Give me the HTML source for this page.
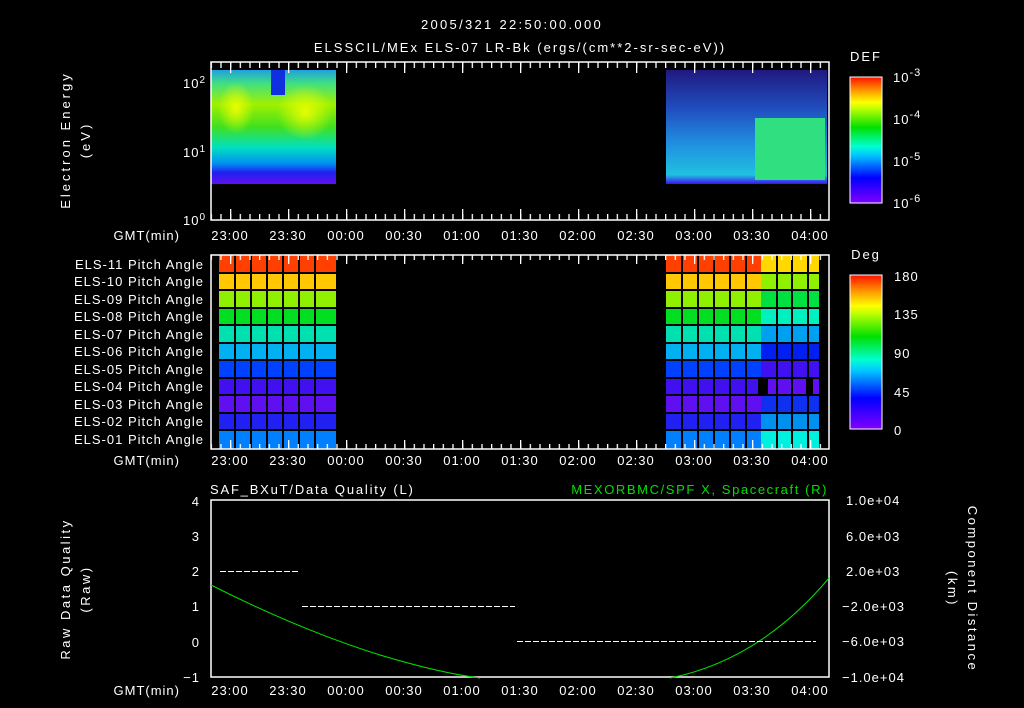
<!DOCTYPE html>
<html><head><meta charset="utf-8"><style>
html,body{margin:0;padding:0;background:#000;}
svg{display:block}
text{font-family:"Liberation Sans",sans-serif;fill:#fff;font-size:13px;letter-spacing:1px}
</style></head><body>
<svg width="1024" height="708" viewBox="0 0 1024 708" xmlns="http://www.w3.org/2000/svg">
<defs>
<linearGradient id="rb" x1="0" y1="1" x2="0" y2="0">
<stop offset="0" stop-color="#8000ff"/><stop offset="0.2" stop-color="#0000ff"/><stop offset="0.38" stop-color="#00c8ff"/><stop offset="0.45" stop-color="#00ffd0"/><stop offset="0.6" stop-color="#00e000"/><stop offset="0.75" stop-color="#c0ff00"/><stop offset="0.8" stop-color="#ffff00"/><stop offset="0.9" stop-color="#ff9000"/><stop offset="1" stop-color="#ff1000"/></linearGradient>
<linearGradient id="spL" x1="0" y1="0" x2="0" y2="1">
<stop offset="0" stop-color="#20a0e0"/><stop offset="0.12" stop-color="#40e080"/><stop offset="0.3" stop-color="#a0f000"/><stop offset="0.5" stop-color="#40e020"/><stop offset="0.68" stop-color="#00e0c0"/><stop offset="0.82" stop-color="#0090f0"/><stop offset="0.9" stop-color="#2020f0"/><stop offset="1" stop-color="#6010f0"/></linearGradient>
<linearGradient id="spR" x1="0" y1="0" x2="0" y2="1">
<stop offset="0" stop-color="#201880"/><stop offset="0.35" stop-color="#2050c0"/><stop offset="0.65" stop-color="#2090e0"/><stop offset="0.92" stop-color="#20c0e0"/><stop offset="1" stop-color="#4010f0"/></linearGradient>
<radialGradient id="yl"><stop offset="0" stop-color="#f0ff00" stop-opacity="0.9"/><stop offset="1" stop-color="#f0ff00" stop-opacity="0"/></radialGradient>
<pattern id="tk" x="230" y="0" width="9.667" height="708" patternUnits="userSpaceOnUse"><rect x="0" y="0" width="1.3" height="708" fill="#fff"/></pattern>
<pattern id="tkM" x="230" y="0" width="58" height="708" patternUnits="userSpaceOnUse"><rect x="0" y="0" width="1.3" height="708" fill="#fff"/></pattern>
</defs>

<text x="512" y="29" text-anchor="middle" font-size="18" style="letter-spacing:2.3px">2005/321 22:50:00.000</text>
<text x="520" y="52" text-anchor="middle" font-size="17" style="letter-spacing:2px">ELSSCIL/MEx ELS-07 LR-Bk  (ergs/(cm**2-sr-sec-eV))</text>

<!-- Panel 1 -->
<rect x="211" y="70" width="125" height="114" fill="url(#spL)"/>
<ellipse cx="236" cy="108" rx="18" ry="26" fill="url(#yl)"/>
<ellipse cx="305" cy="112" rx="28" ry="28" fill="url(#yl)"/>
<rect x="271" y="70" width="14" height="25" fill="#1030e0"/>
<rect x="666" y="70" width="161" height="114" fill="url(#spR)"/>
<rect x="755" y="118" width="70" height="62" fill="#30e080"/>
<rect x="211" y="62" width="618" height="6" fill="url(#tk)"/>
<rect x="211" y="62" width="618" height="11" fill="url(#tkM)"/>
<rect x="211" y="214" width="618" height="6" fill="url(#tk)"/>
<rect x="211" y="209" width="618" height="11" fill="url(#tkM)"/>
<rect x="211" y="62" width="618" height="158" fill="none" stroke="#fff" stroke-width="1.5"/>
<text x="206" y="88" text-anchor="end" font-size="14">10<tspan dy="-5" font-size="10">2</tspan></text>
<text x="206" y="157" text-anchor="end" font-size="14">10<tspan dy="-5" font-size="10">1</tspan></text>
<text x="206" y="225" text-anchor="end" font-size="14">10<tspan dy="-5" font-size="10">0</tspan></text>
<text transform="translate(70,140) rotate(-90)" text-anchor="middle" font-size="15" style="letter-spacing:3px">Electron Energy</text>
<text transform="translate(90,140) rotate(-90)" text-anchor="middle" font-size="15" style="letter-spacing:3px">(eV)</text>
<text x="180" y="240" text-anchor="end">GMT(min)</text>
<g text-anchor="middle" font-size="14">
<text x="230" y="240">23:00</text><text x="288" y="240">23:30</text><text x="346" y="240">00:00</text><text x="404" y="240">00:30</text><text x="462" y="240">01:00</text><text x="520" y="240">01:30</text><text x="578" y="240">02:00</text><text x="636" y="240">02:30</text><text x="694" y="240">03:00</text><text x="752" y="240">03:30</text><text x="810" y="240">04:00</text></g>
<text x="866" y="61" text-anchor="middle" font-size="17" style="letter-spacing:2px">DEF</text>
<rect x="850" y="77" width="32" height="126" fill="url(#rb)" stroke="#fff"/>
<g font-size="16"><text x="893" y="82">10<tspan dy="-6" font-size="11">-3</tspan></text><text x="893" y="124">10<tspan dy="-6" font-size="11">-4</tspan></text><text x="893" y="166">10<tspan dy="-6" font-size="11">-5</tspan></text><text x="893" y="208">10<tspan dy="-6" font-size="11">-6</tspan></text></g>

<!-- Panel 2 -->
<g id="rows">
<rect x="219" y="255" width="117" height="18" fill="#ff4000"/>
<rect x="219" y="273" width="117" height="17" fill="#ffc800"/>
<rect x="219" y="290" width="117" height="18" fill="#90f000"/>
<rect x="219" y="308" width="117" height="17" fill="#00e020"/>
<rect x="219" y="325" width="117" height="18" fill="#00e0b0"/>
<rect x="219" y="343" width="117" height="17" fill="#00b0f0"/>
<rect x="219" y="360" width="117" height="18" fill="#0040ff"/>
<rect x="219" y="378" width="117" height="17" fill="#4010f0"/>
<rect x="219" y="395" width="117" height="18" fill="#6010f0"/>
<rect x="219" y="413" width="117" height="17" fill="#2020f0"/>
<rect x="219" y="430" width="117" height="19" fill="#0080ff"/>
</g>
<use href="#rows" x="447"/>
<g>
<rect x="761" y="255" width="58" height="18" fill="#ffd800"/>
<rect x="761" y="273" width="58" height="17" fill="#90f000"/>
<rect x="761" y="290" width="58" height="18" fill="#00e040"/>
<rect x="761" y="308" width="58" height="17" fill="#00f0c0"/>
<rect x="761" y="325" width="58" height="18" fill="#00a0f0"/>
<rect x="761" y="343" width="58" height="17" fill="#0020f0"/>
<rect x="761" y="360" width="58" height="18" fill="#4010f0"/>
<rect x="761" y="378" width="58" height="17" fill="#6010f0"/>
<rect x="761" y="395" width="58" height="18" fill="#1030f0"/>
<rect x="761" y="413" width="58" height="17" fill="#0090f0"/>
<rect x="761" y="430" width="58" height="19" fill="#00f0e0"/>
<rect x="758" y="378" width="10" height="17" fill="#000"/><rect x="806" y="378" width="7" height="17" fill="#000"/>
</g>
<g stroke="#000" stroke-width="2">
<path d="M219 273H336M219 290H336M219 308H336M219 325H336M219 343H336M219 360H336M219 378H336M219 395H336M219 413H336M219 430H336"/>
<path d="M666 273H819M666 290H819M666 308H819M666 325H819M666 343H819M666 360H819M666 378H819M666 395H819M666 413H819M666 430H819"/>
<path d="M235 255V449M251 255V449M267 255V449M283 255V449M299 255V449M315 255V449M682 255V449M698 255V449M714 255V449M730 255V449M746 255V449M777 255V449M792 255V449M808 255V449"/>
</g>
<rect x="211" y="255" width="618" height="5" fill="url(#tk)"/>
<rect x="211" y="255" width="618" height="9" fill="url(#tkM)"/>
<rect x="211" y="444" width="618" height="5" fill="url(#tk)"/>
<rect x="211" y="440" width="618" height="9" fill="url(#tkM)"/>
<rect x="211" y="255" width="618" height="194" fill="none" stroke="#fff" stroke-width="1.5"/>
<g text-anchor="end" font-size="12" style="letter-spacing:1.6px">
<text x="204" y="269">ELS-11 Pitch Angle</text><text x="204" y="286">ELS-10 Pitch Angle</text><text x="204" y="304">ELS-09 Pitch Angle</text><text x="204" y="321">ELS-08 Pitch Angle</text><text x="204" y="339">ELS-07 Pitch Angle</text><text x="204" y="356">ELS-06 Pitch Angle</text><text x="204" y="374">ELS-05 Pitch Angle</text><text x="204" y="391">ELS-04 Pitch Angle</text><text x="204" y="409">ELS-03 Pitch Angle</text><text x="204" y="426">ELS-02 Pitch Angle</text><text x="204" y="444">ELS-01 Pitch Angle</text></g>
<text x="180" y="465" text-anchor="end">GMT(min)</text>
<g text-anchor="middle" font-size="14">
<text x="230" y="465">23:00</text><text x="288" y="465">23:30</text><text x="346" y="465">00:00</text><text x="404" y="465">00:30</text><text x="462" y="465">01:00</text><text x="520" y="465">01:30</text><text x="578" y="465">02:00</text><text x="636" y="465">02:30</text><text x="694" y="465">03:00</text><text x="752" y="465">03:30</text><text x="810" y="465">04:00</text></g>
<text x="866" y="259" text-anchor="middle" font-size="17" style="letter-spacing:2px">Deg</text>
<rect x="850" y="275" width="32" height="154" fill="url(#rb)" stroke="#fff"/>
<g font-size="18"><text x="894" y="281">180</text><text x="894" y="319">135</text><text x="894" y="358">90</text><text x="894" y="397">45</text><text x="894" y="435">0</text></g>

<!-- Panel 3 -->
<text x="210" y="494" font-size="15" style="letter-spacing:1.8px">SAF_BXuT/Data Quality (L)</text>
<text x="828" y="494" text-anchor="end" font-size="15" style="fill:#00e000;letter-spacing:1.6px">MEXORBMC/SPF X, Spacecraft (R)</text>
<rect x="211" y="500" width="618" height="177" fill="none" stroke="#fff" stroke-width="1.5"/>
<path d="M211 585 Q300 630 380 655 Q440 673 480 678 M670 678 Q760 660 829 578" fill="none" stroke="#00e000" stroke-width="1"/>
<g stroke="#fff" stroke-dasharray="6 2"><path d="M220 571.5H300"/><path d="M302 606.5H515"/><path d="M517 641.5H816"/></g>
<g text-anchor="end" font-size="15"><text x="200" y="506">4</text><text x="200" y="541">3</text><text x="200" y="576">2</text><text x="200" y="611">1</text><text x="200" y="647">0</text><text x="200" y="682">−1</text></g>
<g font-size="12"><text x="846" y="505">1.0e+04</text><text x="846" y="541">6.0e+03</text><text x="846" y="576">2.0e+03</text><text x="842" y="611">−2.0e+03</text><text x="842" y="646">−6.0e+03</text><text x="842" y="682">−1.0e+04</text></g>
<text transform="translate(70,589) rotate(-90)" text-anchor="middle" font-size="15" style="letter-spacing:2.5px">Raw Data Quality</text>
<text transform="translate(90,589) rotate(-90)" text-anchor="middle" font-size="15" style="letter-spacing:2.5px">(Raw)</text>
<text transform="translate(968,589) rotate(90)" text-anchor="middle" font-size="15" style="letter-spacing:2.5px">Component Distance</text>
<text transform="translate(948,589) rotate(90)" text-anchor="middle" font-size="15" style="letter-spacing:2.5px">(km)</text>
<text x="180" y="695" text-anchor="end">GMT(min)</text>
<g text-anchor="middle" font-size="14">
<text x="230" y="695">23:00</text><text x="288" y="695">23:30</text><text x="346" y="695">00:00</text><text x="404" y="695">00:30</text><text x="462" y="695">01:00</text><text x="520" y="695">01:30</text><text x="578" y="695">02:00</text><text x="636" y="695">02:30</text><text x="694" y="695">03:00</text><text x="752" y="695">03:30</text><text x="810" y="695">04:00</text></g>
</svg>
</body></html>
